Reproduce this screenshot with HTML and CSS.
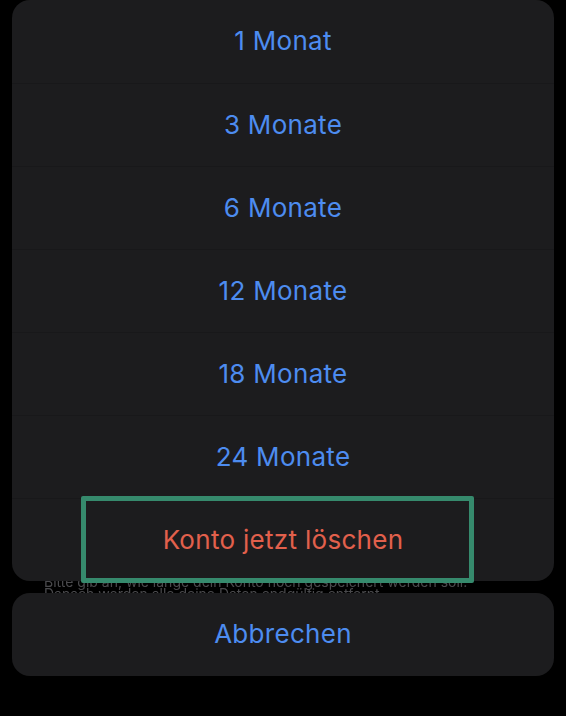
FILE: index.html
```html
<!DOCTYPE html>
<html lang="de">
<head>
    <meta charset="UTF-8">
    <meta name="viewport" content="width=device-width, initial-scale=1.0">
    <title>Konto löschen</title>
    <link rel="stylesheet" href="styles.css">
</head>
<body>
    <div class="action-sheet">
        <div class="sheet-group">
            <button class="sheet-option">1 Monat</button>
            <button class="sheet-option">3 Monate</button>
            <button class="sheet-option">6 Monate</button>
            <button class="sheet-option">12 Monate</button>
            <button class="sheet-option">18 Monate</button>
            <button class="sheet-option">24 Monate</button>
            <button class="sheet-option destructive">Konto jetzt löschen</button>
        </div>
        <!-- page text peeking through between the two groups -->
        <div class="sheet-gap">
            <p>Bitte gib an, wie lange dein Konto noch gespeichert werden soll.</p>
            <p>Danach werden alle deine Daten endgültig entfernt.</p>
        </div>
        <div class="sheet-group">
            <button class="sheet-option">Abbrechen</button>
        </div>
        <div class="highlight"></div>
    </div>
</body>
</html>
```

FILE: styles.css
```css
/* Page background */
body {
    margin: 0;
    background-color: #000;
    font-family: Inter, "Noto Sans", sans-serif;
    height: 716px;
    overflow: hidden;
}
/* Whole action sheet */
.action-sheet {
    position: relative;
    padding: 0 12px;
}
/* Rounded group of options */
.sheet-group {
    display: flex;
    flex-direction: column;
    background-color: #1c1c1e;
    border-radius: 18px;
    overflow: hidden;
}
/* Single option row */
.sheet-option {
    height: 83px;
    border: none;
    border-top: 1px solid #18181a;
    background: transparent;
    color: #4d8cf0;
    font-family: inherit;
    font-size: 26px;
    letter-spacing: 0.3px;
    padding: 0 0 2px;
}
.sheet-option:first-child {
    border-top: none;
}
.sheet-group:last-of-type .sheet-option {
    height: 82px;
}
/* Red option */
.sheet-option.destructive {
    color: #e2604c;
}
/* Gap between the groups */
.sheet-gap {
    height: 12px;
    overflow: hidden;
    padding: 0 32px;
    color: #4a4a4d;
    font-size: 14px;
    line-height: 12px;
}
.sheet-gap p {
    margin: -5px 0 0;
    white-space: nowrap;
    filter: blur(0.6px);
}
.sheet-gap p + p {
    margin-top: 0;
}
/* Green outline around the delete option */
.highlight {
    position: absolute;
    left: 81px;
    top: 496px;
    width: 383px;
    height: 77px;
    border: 5px solid #368a6d;
    border-radius: 2px;
}
```
